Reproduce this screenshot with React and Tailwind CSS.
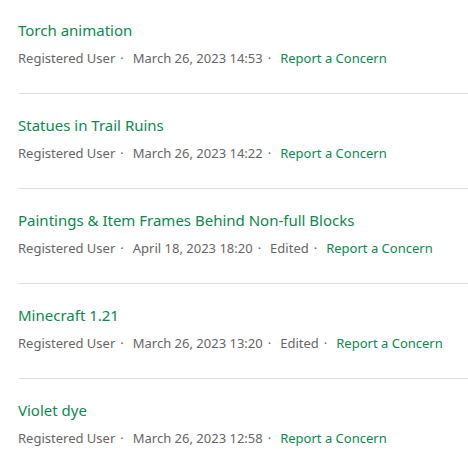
const POSTS = [
  { title: 'Torch animation', date: 'March 26, 2023 14:53', edited: false },
  { title: 'Statues in Trail Ruins', date: 'March 26, 2023 14:22', edited: false },
  { title: 'Paintings & Item Frames Behind Non-full Blocks', date: 'April 18, 2023 18:20', edited: true },
  { title: 'Minecraft 1.21', date: 'March 26, 2023 13:20', edited: true },
  { title: 'Violet dye', date: 'March 26, 2023 12:58', edited: false },
]

function Meta({ children }) {
  return (
    <span className="flex items-center">
      {children}
      <span className="ml-[5px]">·</span>
    </span>
  )
}

export default function App() {
  return (
    <div className="bg-white pl-[19px] font-['Noto_Sans',sans-serif]">
      {POSTS.map((post, i) => (
        <div key={i} className="border-b border-[#dddddd] pt-[19px] pb-[25px] [&+div]:pt-[20px]">
          <a href="#" className="-ml-px block text-[15px] leading-[22px] text-[#0a8a4e]">
            {post.title}
          </a>
          <div className="-ml-px mt-[7px] flex items-center gap-x-[9px] text-[13px] leading-[20px] text-[#666666]">
            <Meta>Registered User</Meta>
            <Meta>{post.date}</Meta>
            {post.edited && <Meta>Edited</Meta>}
            <a href="#" className="text-[#0a8a4e]">Report a Concern</a>
          </div>
        </div>
      ))}
    </div>
  )
}
